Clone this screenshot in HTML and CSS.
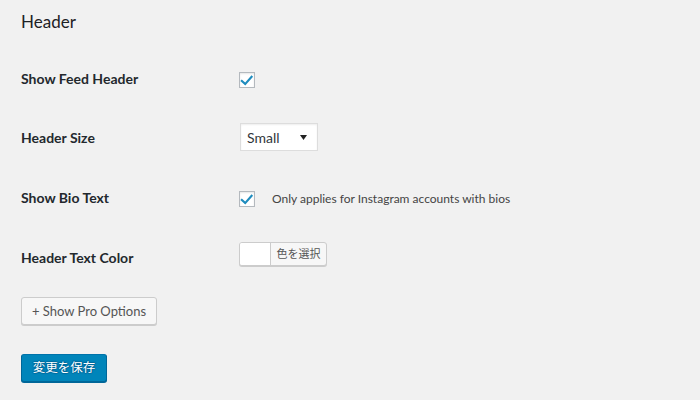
FILE: index.html
```html
<!DOCTYPE html>
<html>
<head>
<meta charset="utf-8">
<link rel="stylesheet" href="styles.css">
</head>
<body>
<div class="page">
  <h2 class="title">Header</h2>
  <div class="rows">
    <div class="row row-1">
      <div class="label">Show Feed Header</div>
      <div class="control ctl-check">
        <span class="checkbox"><svg viewBox="0 0 16 16" width="16" height="16"><path d="M2.8 7.4 L6.2 10.5 L12.5 3.3 L14.1 4.8 L6.3 13.4 L1.3 9 Z" fill="#1e8cbe"/></svg></span>
      </div>
    </div>
    <div class="row row-2">
      <div class="label">Header Size</div>
      <div class="control ctl-select">
        <div class="select"><span>Small</span><svg class="caret" viewBox="0 0 7 5" width="7" height="5"><path d="M0 0 H7 L3.5 5 Z" fill="#222"/></svg></div>
      </div>
    </div>
    <div class="row row-3">
      <div class="label">Show Bio Text</div>
      <div class="control ctl-check bio">
        <span class="checkbox"><svg viewBox="0 0 16 16" width="16" height="16"><path d="M2.8 7.4 L6.2 10.5 L12.5 3.3 L14.1 4.8 L6.3 13.4 L1.3 9 Z" fill="#1e8cbe"/></svg></span>
        <span class="hint">Only applies for Instagram accounts with bios</span>
      </div>
    </div>
    <div class="row row-4">
      <div class="label">Header Text Color</div>
      <div class="control ctl-color">
        <div class="color-btn"><span class="swatch"></span><span class="color-text">色を選択</span></div>
      </div>
    </div>
  </div>
  <button class="btn btn-secondary">+ Show Pro Options</button>
  <button class="btn btn-primary">変更を保存</button>
</div>
</body>
</html>
```

FILE: styles.css
```css
html, body {
  margin: 0;
  padding: 0;
  background: #f1f1f1;
}
body {
  font-family: Lato, "Noto Sans CJK JP", sans-serif;
  color: #23282d;
  width: 700px;
  height: 400px;
  overflow: hidden;
}
.page {
  padding: 10px 0 0 21px;
  display: flex;
  flex-direction: column;
  align-items: flex-start;
}
.title {
  margin: 0;
  font-size: 17px;
  line-height: 23px;
  font-weight: 400;
  color: #1d2125;
}
.rows {
  margin-top: 17px;
  display: flex;
  flex-direction: column;
}
.row {
  display: flex;
  align-items: flex-start;
}
.row-1 { height: 59px; }
.row-2 { height: 60px; }
.row-3 { height: 60px; }
.row-4 { height: 58px; }
.label {
  width: 218px;
  padding-top: 20px;
  font-size: 14px;
  line-height: 18px;
  font-weight: 700;
  color: #23282d;
  white-space: nowrap;
}
.control {
  display: flex;
  align-items: center;
}
.ctl-check { padding-top: 22px; }
.ctl-select { padding-top: 14px; margin-left: 1px; }
.ctl-color { padding-top: 13px; }
.checkbox {
  width: 14px;
  height: 14px;
  border: 1px solid #b4b9be;
  background: #fff;
  box-shadow: inset 0 1px 2px rgba(0,0,0,0.1);
  display: flex;
  align-items: center;
  justify-content: center;
}
.checkbox svg { flex: none; }
.hint {
  margin-left: 17px;
  font-size: 12px;
  line-height: 16px;
  color: #444;
  white-space: nowrap;
}
.select {
  box-sizing: border-box;
  width: 78px;
  height: 28px;
  background: #fff;
  border: 1px solid #ddd;
  box-shadow: inset 0 1px 2px rgba(0,0,0,0.07);
  display: flex;
  align-items: center;
  justify-content: space-between;
  padding: 0 10px 0 6px;
  font-size: 14px;
  color: #32373c;
}
.caret { margin-top: 0; }
.color-btn {
  box-sizing: border-box;
  height: 24px;
  width: 88px;
  border: 1px solid #ccc;
  border-radius: 3px;
  background: #f7f7f7;
  box-shadow: 0 1px 0 #ccc;
  display: flex;
  overflow: hidden;
}
.swatch {
  width: 30px;
  background: #fff;
  border-right: 1px solid #ccc;
}
.color-text {
  flex: 1;
  text-align: center;
  font-size: 11px;
  line-height: 22px;
  color: #555;
  white-space: nowrap;
}
.btn {
  box-sizing: border-box;
  height: 28px;
  padding: 0 6px;
  border-radius: 3px;
  font-family: Lato, "Noto Sans CJK JP", sans-serif;
  font-size: 13px;
  line-height: 26px;
  white-space: nowrap;
  text-align: center;
  cursor: pointer;
}
.btn-secondary {
  margin-top: 10px;
  width: 136px;
  background: #f7f7f7;
  border: 1px solid #ccc;
  box-shadow: 0 1px 0 #ccc;
  color: #555;
}
.btn-primary {
  margin-top: 29px;
  width: 86px;
  background: #0085ba;
  border: 1px solid #0073aa;
  border-color: #0073aa #006799 #006799;
  box-shadow: 0 1px 0 #006799;
  color: #fff;
  font-size: 12.5px;
  text-shadow: 0 -1px 1px #006799, 1px 0 1px #006799, 0 1px 1px #006799, -1px 0 1px #006799;
}
```
